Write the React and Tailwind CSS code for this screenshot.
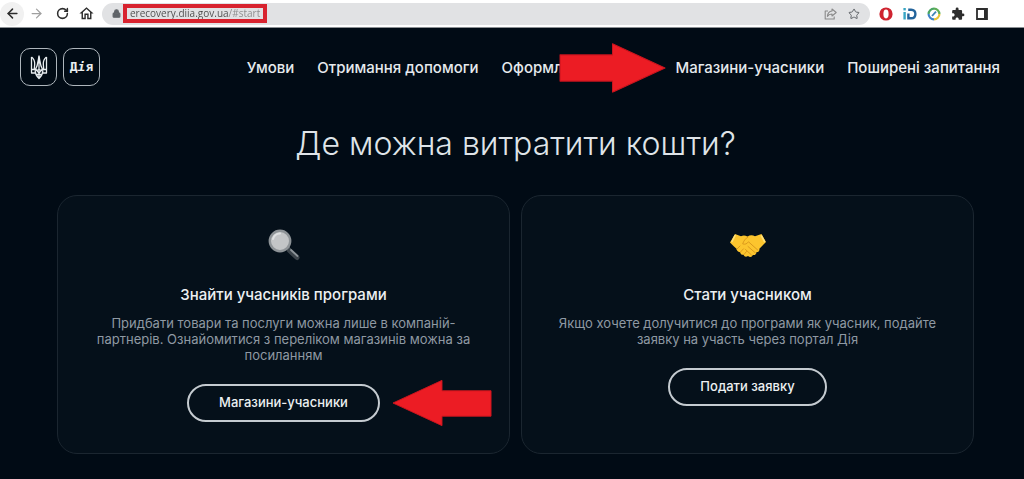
import { ArrowLeft, ArrowRight, Lock, RotateCw, Star } from 'lucide-react'
import { MdExtension, MdOutlineHome } from 'react-icons/md'
import clsx from 'clsx'

const NAV = [
  { label: 'Умови' },
  { label: 'Отримання допомоги' },
  { label: 'Оформлення заявки' },
  { label: 'Магазини-учасники', pointed: true },
  { label: 'Поширені запитання' },
]

const CARDS = [
  {
    icon: <MagnifierIcon />,
    title: 'Знайти учасників програми',
    text: 'Придбати товари та послуги можна лише в компаній-партнерів. Ознайомитися з переліком магазинів можна за посиланням',
    action: 'Магазини-учасники',
    pointed: true,
  },
  {
    icon: <HandshakeIcon />,
    title: 'Стати учасником',
    text: 'Якщо хочете долучитися до програми як учасник, подайте заявку на участь через портал Дія',
    action: 'Подати заявку',
  },
]

function ToolButton({ label, className, children }) {
  return (
    <button type="button" aria-label={label} className={clsx('flex h-6 w-6 shrink-0 items-center justify-center rounded-full', className)}>
      {children}
    </button>
  )
}

function BrowserBar() {
  return (
    <div className="flex h-7 items-center border-b border-[#8b8f93] bg-white pr-[30px] text-[#2d2d2d]">
      <ToolButton label="Назад" className="bg-[#f1f1f1]"><ArrowLeft size={15} strokeWidth={2.4} /></ToolButton>
      <ToolButton label="Вперед" className="text-[#a0a0a0]"><ArrowRight size={15} strokeWidth={2} /></ToolButton>
      <ToolButton label="Оновити" className="ml-[2px]"><RotateCw size={13} strokeWidth={2.8} /></ToolButton>
      <ToolButton label="Додому"><MdOutlineHome size={17} /></ToolButton>

      <div className="ml-1 mr-1 flex h-[22px] flex-1 items-center rounded-full bg-[#e1e2e4] pl-[10px] text-[#5f6368]">
        <Lock size={9} strokeWidth={3} fill="currentColor" />
        <div className="ml-[2px] border-4 border-[#d8232f]">
          <input
            type="text"
            aria-label="Адреса сторінки"
            defaultValue="erecovery.diia.gov.ua/#start"
            className="block h-[11px] w-[136px] bg-linear-to-r from-[#4b4b4b] from-75% to-[#8a8a8a] to-75% bg-clip-text pl-[3px] font-['Open_Sans',sans-serif] text-[10px] leading-[11px] text-transparent outline-none"
          />
        </div>
        <div className="ml-auto flex">
          <ToolButton label="Поділитися">
            <svg width="13" height="12" viewBox="0 0 13 12" fill="none" stroke="#8a8a8a" strokeWidth="1.1" strokeLinejoin="round">
              <path d="M4 3H1.2v8h9V8.5" />
              <path d="M8 1l4.2 3.5L8 8V6C5.8 6 4.4 6.7 3.4 8.4 3.6 5.4 5.2 3.3 8 3z" />
            </svg>
          </ToolButton>
          <ToolButton label="Додати в закладки" className="mr-1"><Star size={12} strokeWidth={2} /></ToolButton>
        </div>
      </div>

      <ToolButton label="Opera">
        <svg width="14" height="14" viewBox="0 0 14 14">
          <circle cx="7" cy="7" r="6.6" fill="#cf2430" />
          <ellipse cx="7" cy="7" rx="2.6" ry="4.4" fill="#fff" />
        </svg>
      </ToolButton>
      <ToolButton label="ID">
        <svg width="14" height="12" viewBox="0 0 14 12" fill="none" stroke="#23649b" strokeWidth="2.4">
          <path d="M1.6 0v2.4" stroke="#38a6c4" />
          <path d="M1.6 4v7.5" stroke="#38a6c4" />
          <path d="M5.2 1.8h3c2.8 0 4.2 1.7 4.2 4.1s-1.4 4.3-4.2 4.3H5.4V5.4" />
        </svg>
      </ToolButton>
      <ToolButton label="Перевірка">
        <svg width="14" height="14" viewBox="0 0 14 14" fill="none" strokeWidth="2.2">
          <path d="M7 1.6A5.4 5.4 0 0 0 1.6 7" stroke="#4aa564" />
          <path d="M1.6 7A5.4 5.4 0 0 0 7 12.4" stroke="#3f83c9" />
          <path d="M7 12.4A5.4 5.4 0 0 0 12.4 7" stroke="#e6c33b" />
          <path d="M12.4 7A5.4 5.4 0 0 0 7 1.6" stroke="#5fae57" />
          <path d="M5 9l4-4.4" stroke="#3b82b5" strokeWidth="1.8" />
        </svg>
      </ToolButton>
      <ToolButton label="Розширення"><MdExtension size={14} /></ToolButton>
      <ToolButton label="Бічна панель">
        <svg width="12" height="12" viewBox="0 0 12 12">
          <path d="M1 1h10v10H1z" fill="none" stroke="currentColor" strokeWidth="1.8" />
          <path d="M8 1h3v10H8z" fill="currentColor" />
        </svg>
      </ToolButton>
    </div>
  )
}

function Trident() {
  return (
    <svg width="18" height="26" viewBox="0 0 18 26" fill="none" stroke="#e8edf0" strokeWidth="1.3" strokeLinejoin="round">
      {/* outer prongs */}
      <path d="M1.5 3v16h3.7M16.500 3v16h-3.700" />
      <path d="M1.500 3c2.300 1.800 3.300 4 3.200 7l-.4 5M16.500 3c-2.300 1.800-3.300 4-3.200 7l.4 5" />
      {/* centre prong */}
      <path d="M9 1.500v14M9 1.500C8 7 8.300 11 5 16.500M9 1.500C10 7 9.700 11 13 16.500" />
      {/* base */}
      <path d="M1.500 15.500H6L9 19l3-3.500h4.500" />
      <path d="M5.200 17c0 4 1.300 5 3.800 7.500 2.500-2.500 3.800-3.500 3.800-7.500L9 15.500zM5.500 20.500h7M9 16v8" />
    </svg>
  )
}

function RedArrow({ className, flip }) {
  return (
    <svg viewBox="0 0 106 50" aria-hidden="true" className={clsx('pointer-events-none absolute top-1/2 -translate-y-1/2', className)}>
      <path
        d={flip ? 'M1 25L53 1V12H105V39H53V49z' : 'M105 25L53 49V38H1V12H53V1z'}
        fill="#ec1c24"
        stroke="#c9151e"
        strokeLinejoin="round"
      />
    </svg>
  )
}

function Header() {
  return (
    <header className="flex items-center justify-between pl-5 pr-6 pt-5">
      <a href="#start" aria-label="Дія" className="flex gap-[6px] text-[#e8edf0]">
        <span className="flex h-[38px] w-[37px] items-center justify-center rounded-[10px] border border-[#aeb6bc]">
          <Trident />
        </span>
        <span className="flex h-[38px] w-[37px] items-center justify-center rounded-[10px] border border-[#aeb6bc] font-['DejaVu_Sans_Mono',monospace] text-[13px] font-bold">
          Д<i>і</i>я
        </span>
      </a>
      <nav className="flex gap-[23px] pt-[2px] text-[15px] font-medium leading-5 text-[#e6eaed]">
        {NAV.map(item => (
          <a key={item.label} href="#start" className="relative whitespace-nowrap">
            {item.label}
            {item.pointed && <RedArrow className="right-full mr-[9px] w-[107px]" />}
          </a>
        ))}
      </nav>
    </header>
  )
}

function MagnifierIcon() {
  return (
    <svg width="32" height="32" viewBox="0 0 32 32">
      <path d="M20 19l3 3" stroke="#8b9196" strokeWidth="3" />
      <path d="M21.500 21.500l7.500 7" stroke="#3c444b" strokeWidth="5" strokeLinecap="round" />
      <path d="M23 21l6.500 6" stroke="#8d9499" strokeWidth="1.800" strokeLinecap="round" />
      <circle cx="12" cy="12" r="10.200" fill="#c3c5c7" stroke="#8e9397" strokeWidth="2.400" />
      <path d="M5 10a7.500 7.500 0 0 1 7-5.500" fill="none" stroke="#dfe1e2" strokeWidth="2" strokeLinecap="round" />
    </svg>
  )
}

function HandshakeIcon() {
  return (
    <svg width="38" height="32" viewBox="0 0 38 32" strokeLinejoin="round" strokeLinecap="round">
      <path d="M6 5L1 13.500l4 4 2.500 2.200c.5 3 2.500 3.300 3.500 3.300.5 2.500 2 3 3.500 2.800.8 2 2.500 2.500 4.500 1.200 2 1.600 4.200 1 4.800-1 2.400.3 3.600-1 3.600-2.800 2.200 0 3.400-1.500 3-3.500L37 13 32.500 5 26 7.200c-2.500-1.200-5-1.200-7.500.2-2.500-1-4.500-1-6.500-.2z" fill="#fcc52e" />
      <path d="M14 15c2 .8 4-.2 5.500-2.200l9.500 8.500M19 8c-2.500 1.500-4.500 4-5.200 6.500M19 17.500l7.500 6.500M16.500 20.500l6 5.500M8 20l3-3M11.500 23l3-3.200M15 25.500l2.500-3" fill="none" stroke="#dc9a1c" strokeWidth="1" />
      <path d="M6 6.500L3 12.500M32.500 7l3 5.500" fill="none" stroke="#ffe07a" strokeWidth="1.600" />
    </svg>
  )
}

function Card({ icon, title, text, action, pointed }) {
  return (
    <section className="flex min-h-[259px] flex-col items-center rounded-[20px] border border-[#1b2630] bg-[#05101a] px-[34px] pb-[31px] pt-[33px] text-center">
      {icon}
      <h2 className="mt-6 text-[15px] font-medium leading-5 text-[#edf0f2]">{title}</h2>
      <p className="mt-[10px] text-[13px] leading-4 text-[#8f99a3]">{text}</p>
      <div className="relative mt-[21px]">
        <button type="button" className="h-[38px] rounded-full border-2 border-[#c5cbd0] px-[30px] text-[13px] font-medium text-[#edf0f2]">
          {action}
        </button>
        {pointed && <RedArrow flip className="left-full ml-3 w-[100px]" />}
      </div>
    </section>
  )
}

export default function App() {
  return (
    <div className="min-h-screen bg-[#010b15] font-['Inter',sans-serif]">
      <BrowserBar />
      <Header />
      <main className="pb-6 pl-[57px] pr-[50px]">
        <h1 className="mt-10 text-center text-[32px] font-light leading-9 text-[#dfe4e8]">Де можна витратити кошти?</h1>
        <div className="mt-[33px] grid grid-cols-2 gap-[11px]">
          {CARDS.map(card => <Card key={card.title} {...card} />)}
        </div>
      </main>
    </div>
  )
}
